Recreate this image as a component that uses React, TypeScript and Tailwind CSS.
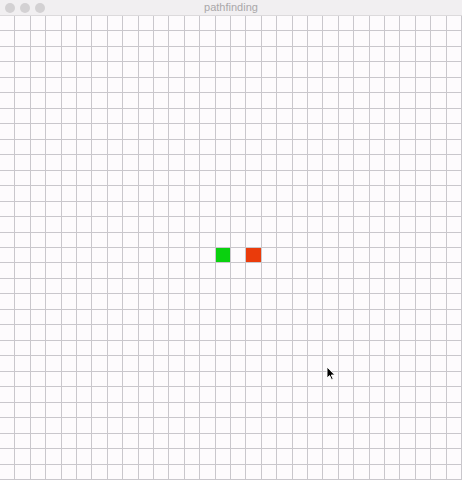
import React from 'react';

const SIZE = 30;
const START = { r: 15, c: 14 };
const END = { r: 15, c: 16 };

function Cell({ r, c }: { r: number; c: number }) {
  let color = 'bg-[#fdfbfd]';
  if (r === START.r && c === START.c) color = 'bg-[#0ad10f]';
  if (r === END.r && c === END.c) color = 'bg-[#ea3b0b]';
  return <div className={`${color} border-r border-b border-[#c9c7cc]`} />;
}

export default function App() {
  const cells = [];
  for (let r = 0; r < SIZE; r++) {
    for (let c = 0; c < SIZE; c++) {
      cells.push(<Cell key={`${r}-${c}`} r={r} c={c} />);
    }
  }

  return (
    <div className="relative w-[462px] h-[480px] flex flex-col overflow-hidden bg-[#fdfbfd] font-['Liberation_Sans',sans-serif]">
      <div className="relative h-[16px] shrink-0 bg-[#f1eff1] border-b border-[#dcdadc] flex items-center justify-center">
        <div className="absolute left-[5px] top-[3px] flex gap-[5px]">
          <span className="w-[10px] h-[10px] rounded-full bg-[#d3d1d3]" />
          <span className="w-[10px] h-[10px] rounded-full bg-[#d3d1d3]" />
          <span className="w-[10px] h-[10px] rounded-full bg-[#d3d1d3]" />
        </div>
        <span className="text-[11px] leading-none text-[#a9a7a9]">pathfinding</span>
      </div>
      <div className="flex-1 grid grid-cols-[repeat(30,1fr)] grid-rows-[repeat(30,1fr)]">
        {cells}
      </div>
      <svg className="absolute left-[326px] top-[366px]" width="10" height="15" viewBox="0 0 10 15">
        <path d="M1 1 L1 12 L3.6 9.6 L5.6 13.8 L7.2 13.1 L5.3 9 L8.8 9 Z" fill="#000" stroke="#fff" strokeWidth="0.9" />
      </svg>
    </div>
  );
}
